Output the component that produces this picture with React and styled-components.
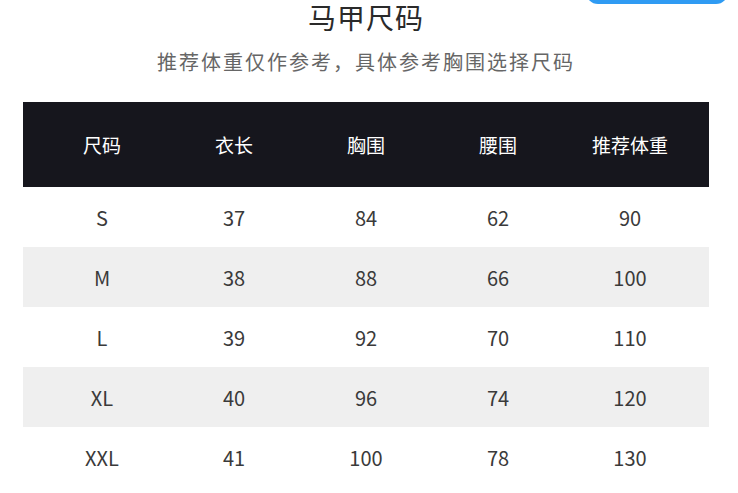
import React from 'react'
import styled, { createGlobalStyle } from 'styled-components'

const GlobalStyle = createGlobalStyle`
  html, body {
    margin: 0;
    padding: 0;
    background: #fff;
  }
  body {
    font-family: 'Noto Sans CJK SC', 'Noto Sans', sans-serif;
  }
`

const columns = ['尺码', '衣长', '胸围', '腰围', '推荐体重']

const rows = [
  ['S', 37, 84, 62, 90],
  ['M', 38, 88, 66, 100],
  ['L', 39, 92, 70, 110],
  ['XL', 40, 96, 74, 120],
  ['XXL', 41, 100, 78, 130],
]

const App = () => {
  return (
    <Page>
      <GlobalStyle />
      <FloatButton />
      <Title>马甲尺码</Title>
      <Subtitle>推荐体重仅作参考，具体参考胸围选择尺码</Subtitle>
      <Table>
        <HeadRow>
          {columns.map((c) => (
            <Cell key={c}>{c}</Cell>
          ))}
        </HeadRow>
        {rows.map((r, i) => (
          <Row key={r[0]} striped={i % 2 === 1}>
            {r.map((v, j) => (
              <Cell key={j}>{v}</Cell>
            ))}
          </Row>
        ))}
      </Table>
    </Page>
  )
}

export default App

const Page = styled.div`
  position: relative;
  box-sizing: border-box;
  width: 738px;
  height: 493px;
  padding: 1px 6px 0 0;
  overflow: hidden;
  display: flex;
  flex-direction: column;
  align-items: center;
`
const FloatButton = styled.div`
  position: absolute;
  top: -36px;
  left: 586px;
  width: 142px;
  height: 40px;
  border-radius: 12px;
  background-color: #2f9bf3;
`
const Title = styled.h1`
  margin: 0;
  font-size: 28px;
  line-height: 32px;
  font-weight: 400;
  letter-spacing: 1px;
  color: #2a2a2a;
`
const Subtitle = styled.p`
  margin: 15px 0 0;
  font-size: 20px;
  line-height: 28px;
  letter-spacing: 2px;
  color: #666;
`
const Table = styled.div`
  margin-top: 26px;
  width: 686px;
  display: flex;
  flex-direction: column;
`
const HeadRow = styled.div`
  display: grid;
  grid-template-columns: repeat(5, 1fr);
  align-items: center;
  height: 85px;
  padding: 0 13px;
  background-color: #16161d;
  color: #fff;
  font-size: 19px;
`
const Row = styled.div`
  display: grid;
  grid-template-columns: repeat(5, 1fr);
  align-items: center;
  height: 60px;
  padding: 0 13px;
  background-color: ${(p) => (p.striped ? '#efefef' : '#fff')};
  color: #3a3a3a;
  font-size: 20px;
`
const Cell = styled.div`
  text-align: center;
`
